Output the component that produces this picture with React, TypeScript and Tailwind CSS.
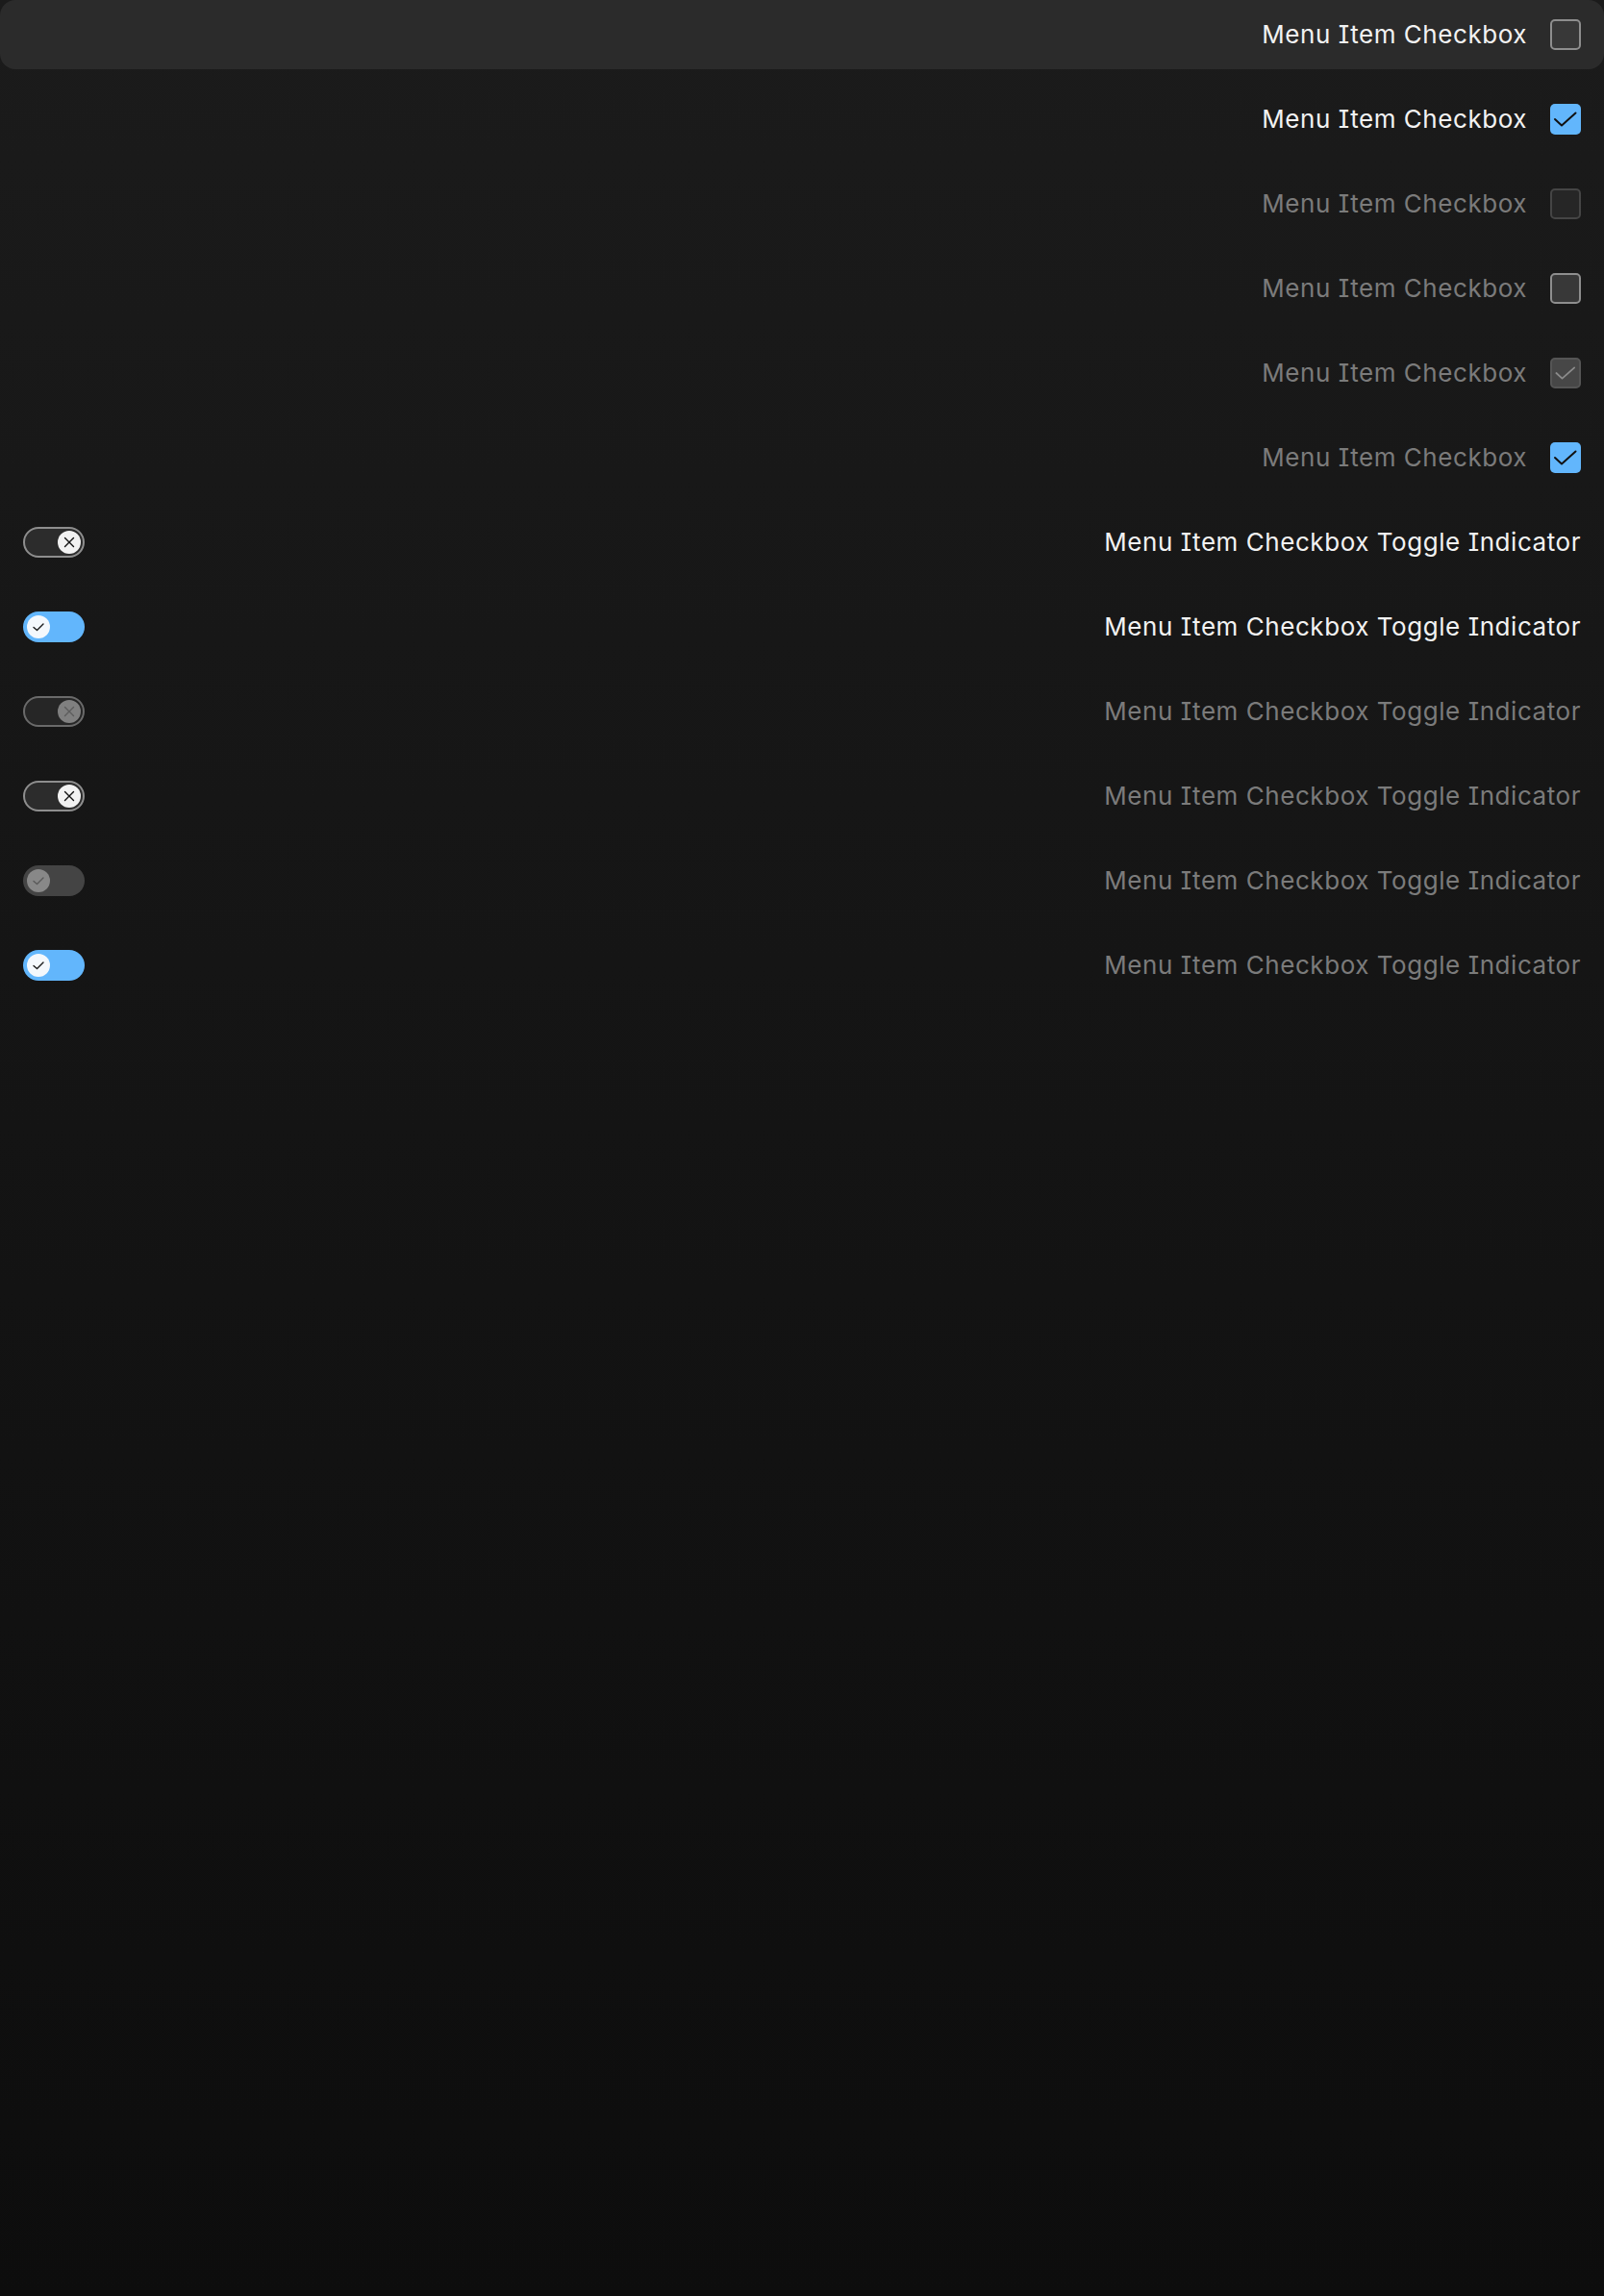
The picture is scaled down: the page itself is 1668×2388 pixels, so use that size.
import React from "react";

type CheckState = "unchecked" | "checked" | "disabled" | "disabledChecked";

const rows: { label: string; state: CheckState; dim: boolean; hover?: boolean }[] = [
  { label: "Menu Item Checkbox", state: "unchecked", dim: false, hover: true },
  { label: "Menu Item Checkbox", state: "checked", dim: false },
  { label: "Menu Item Checkbox", state: "disabled", dim: true },
  { label: "Menu Item Checkbox", state: "unchecked", dim: true },
  { label: "Menu Item Checkbox", state: "disabledChecked", dim: true },
  { label: "Menu Item Checkbox", state: "checked", dim: true },
];

type ToggleState = "off" | "on" | "disabledOff" | "disabledOn";

const toggles: { state: ToggleState; dim: boolean }[] = [
  { state: "off", dim: false },
  { state: "on", dim: false },
  { state: "disabledOff", dim: true },
  { state: "off", dim: true },
  { state: "disabledOn", dim: true },
  { state: "on", dim: true },
];

function Check({ color, size = 32, width = 2 }: { color: string; size?: number; width?: number }) {
  return (
    <svg width={size} height={size} viewBox="0 0 32 32" fill="none">
      <polyline points="5,16 12,22.5 26.5,9.5" stroke={color} strokeWidth={width} strokeLinecap="round" strokeLinejoin="round" />
    </svg>
  );
}

function Checkbox({ state }: { state: CheckState }) {
  if (state === "checked") {
    return (
      <div className="w-8 h-8 rounded-[5px] bg-[#62b6fc] flex items-center justify-center">
        <Check color="#111111" />
      </div>
    );
  }
  if (state === "disabledChecked") {
    return (
      <div className="w-8 h-8 rounded-[5px] bg-[#474747] border-2 border-[#555555] flex items-center justify-center">
        <Check color="#8c8c8c" size={28} />
      </div>
    );
  }
  if (state === "disabled") {
    return <div className="w-8 h-8 rounded-[5px] bg-[#262626] border-2 border-[#454545]" />;
  }
  return <div className="w-8 h-8 rounded-[5px] bg-[#383838] border-2 border-[#8e8e8e]" />;
}

function Cross({ color }: { color: string }) {
  return (
    <svg width="16" height="16" viewBox="0 0 16 16" fill="none">
      <path d="M3.5 3.5 L12.5 12.5 M12.5 3.5 L3.5 12.5" stroke={color} strokeWidth={1.4} strokeLinecap="round" />
    </svg>
  );
}

function SmallCheck({ color }: { color: string }) {
  return (
    <svg width="16" height="16" viewBox="0 0 16 16" fill="none">
      <polyline points="3,8.5 6.5,11.5 13,5" stroke={color} strokeWidth={1.4} strokeLinecap="round" strokeLinejoin="round" />
    </svg>
  );
}

function Toggle({ state }: { state: ToggleState }) {
  if (state === "on") {
    return (
      <div className="w-16 h-8 rounded-full bg-[#62b6fc] flex items-center pl-1">
        <div className="w-6 h-6 rounded-full bg-[#f4f8fc] flex items-center justify-center">
          <SmallCheck color="#1a1a1a" />
        </div>
      </div>
    );
  }
  if (state === "disabledOn") {
    return (
      <div className="w-16 h-8 rounded-full bg-[#444444] flex items-center pl-1">
        <div className="w-6 h-6 rounded-full bg-[#888888] flex items-center justify-center">
          <SmallCheck color="#5a5a5a" />
        </div>
      </div>
    );
  }
  if (state === "disabledOff") {
    return (
      <div className="w-16 h-8 rounded-full bg-[#262626] border-2 border-[#6a6a6a] flex items-center justify-end pr-[2px]">
        <div className="w-6 h-6 rounded-full bg-[#808080] flex items-center justify-center">
          <Cross color="#5c5c5c" />
        </div>
      </div>
    );
  }
  return (
    <div className="w-16 h-8 rounded-full bg-[#2c2c2c] border-2 border-[#8e8e8e] flex items-center justify-end pr-[2px]">
      <div className="w-6 h-6 rounded-full bg-[#f2f2f2] flex items-center justify-center">
        <Cross color="#111111" />
      </div>
    </div>
  );
}

export default function App() {
  return (
    <div
      className="min-h-[2388px] w-full bg-gradient-to-b from-[#1b1b1b] to-[#0d0d0d] [font-feature-settings:'cv08']"
      style={{ fontFamily: "Inter, 'Noto Sans', sans-serif" }}
    >
      <div className="flex flex-col gap-4">
        {rows.map((r, i) => (
          <div
            key={i}
            className={`h-[72px] flex items-center justify-end gap-6 px-6 rounded-2xl ${r.hover ? "bg-[#2b2b2b]" : ""}`}
          >
            <span className={`text-[26px] leading-none tracking-[0.55px] ${r.dim ? "text-[#7b7b7b]" : "text-[#f2f2f2]"}`}>{r.label}</span>
            <Checkbox state={r.state} />
          </div>
        ))}
        {toggles.map((t, i) => (
          <div key={i} className="h-[72px] flex items-center justify-between px-6 rounded-2xl">
            <Toggle state={t.state} />
            <span className={`text-[26px] leading-none tracking-[0.55px] ${t.dim ? "text-[#7b7b7b]" : "text-[#f2f2f2]"}`}>
              Menu Item Checkbox Toggle Indicator
            </span>
          </div>
        ))}
      </div>
    </div>
  );
}
